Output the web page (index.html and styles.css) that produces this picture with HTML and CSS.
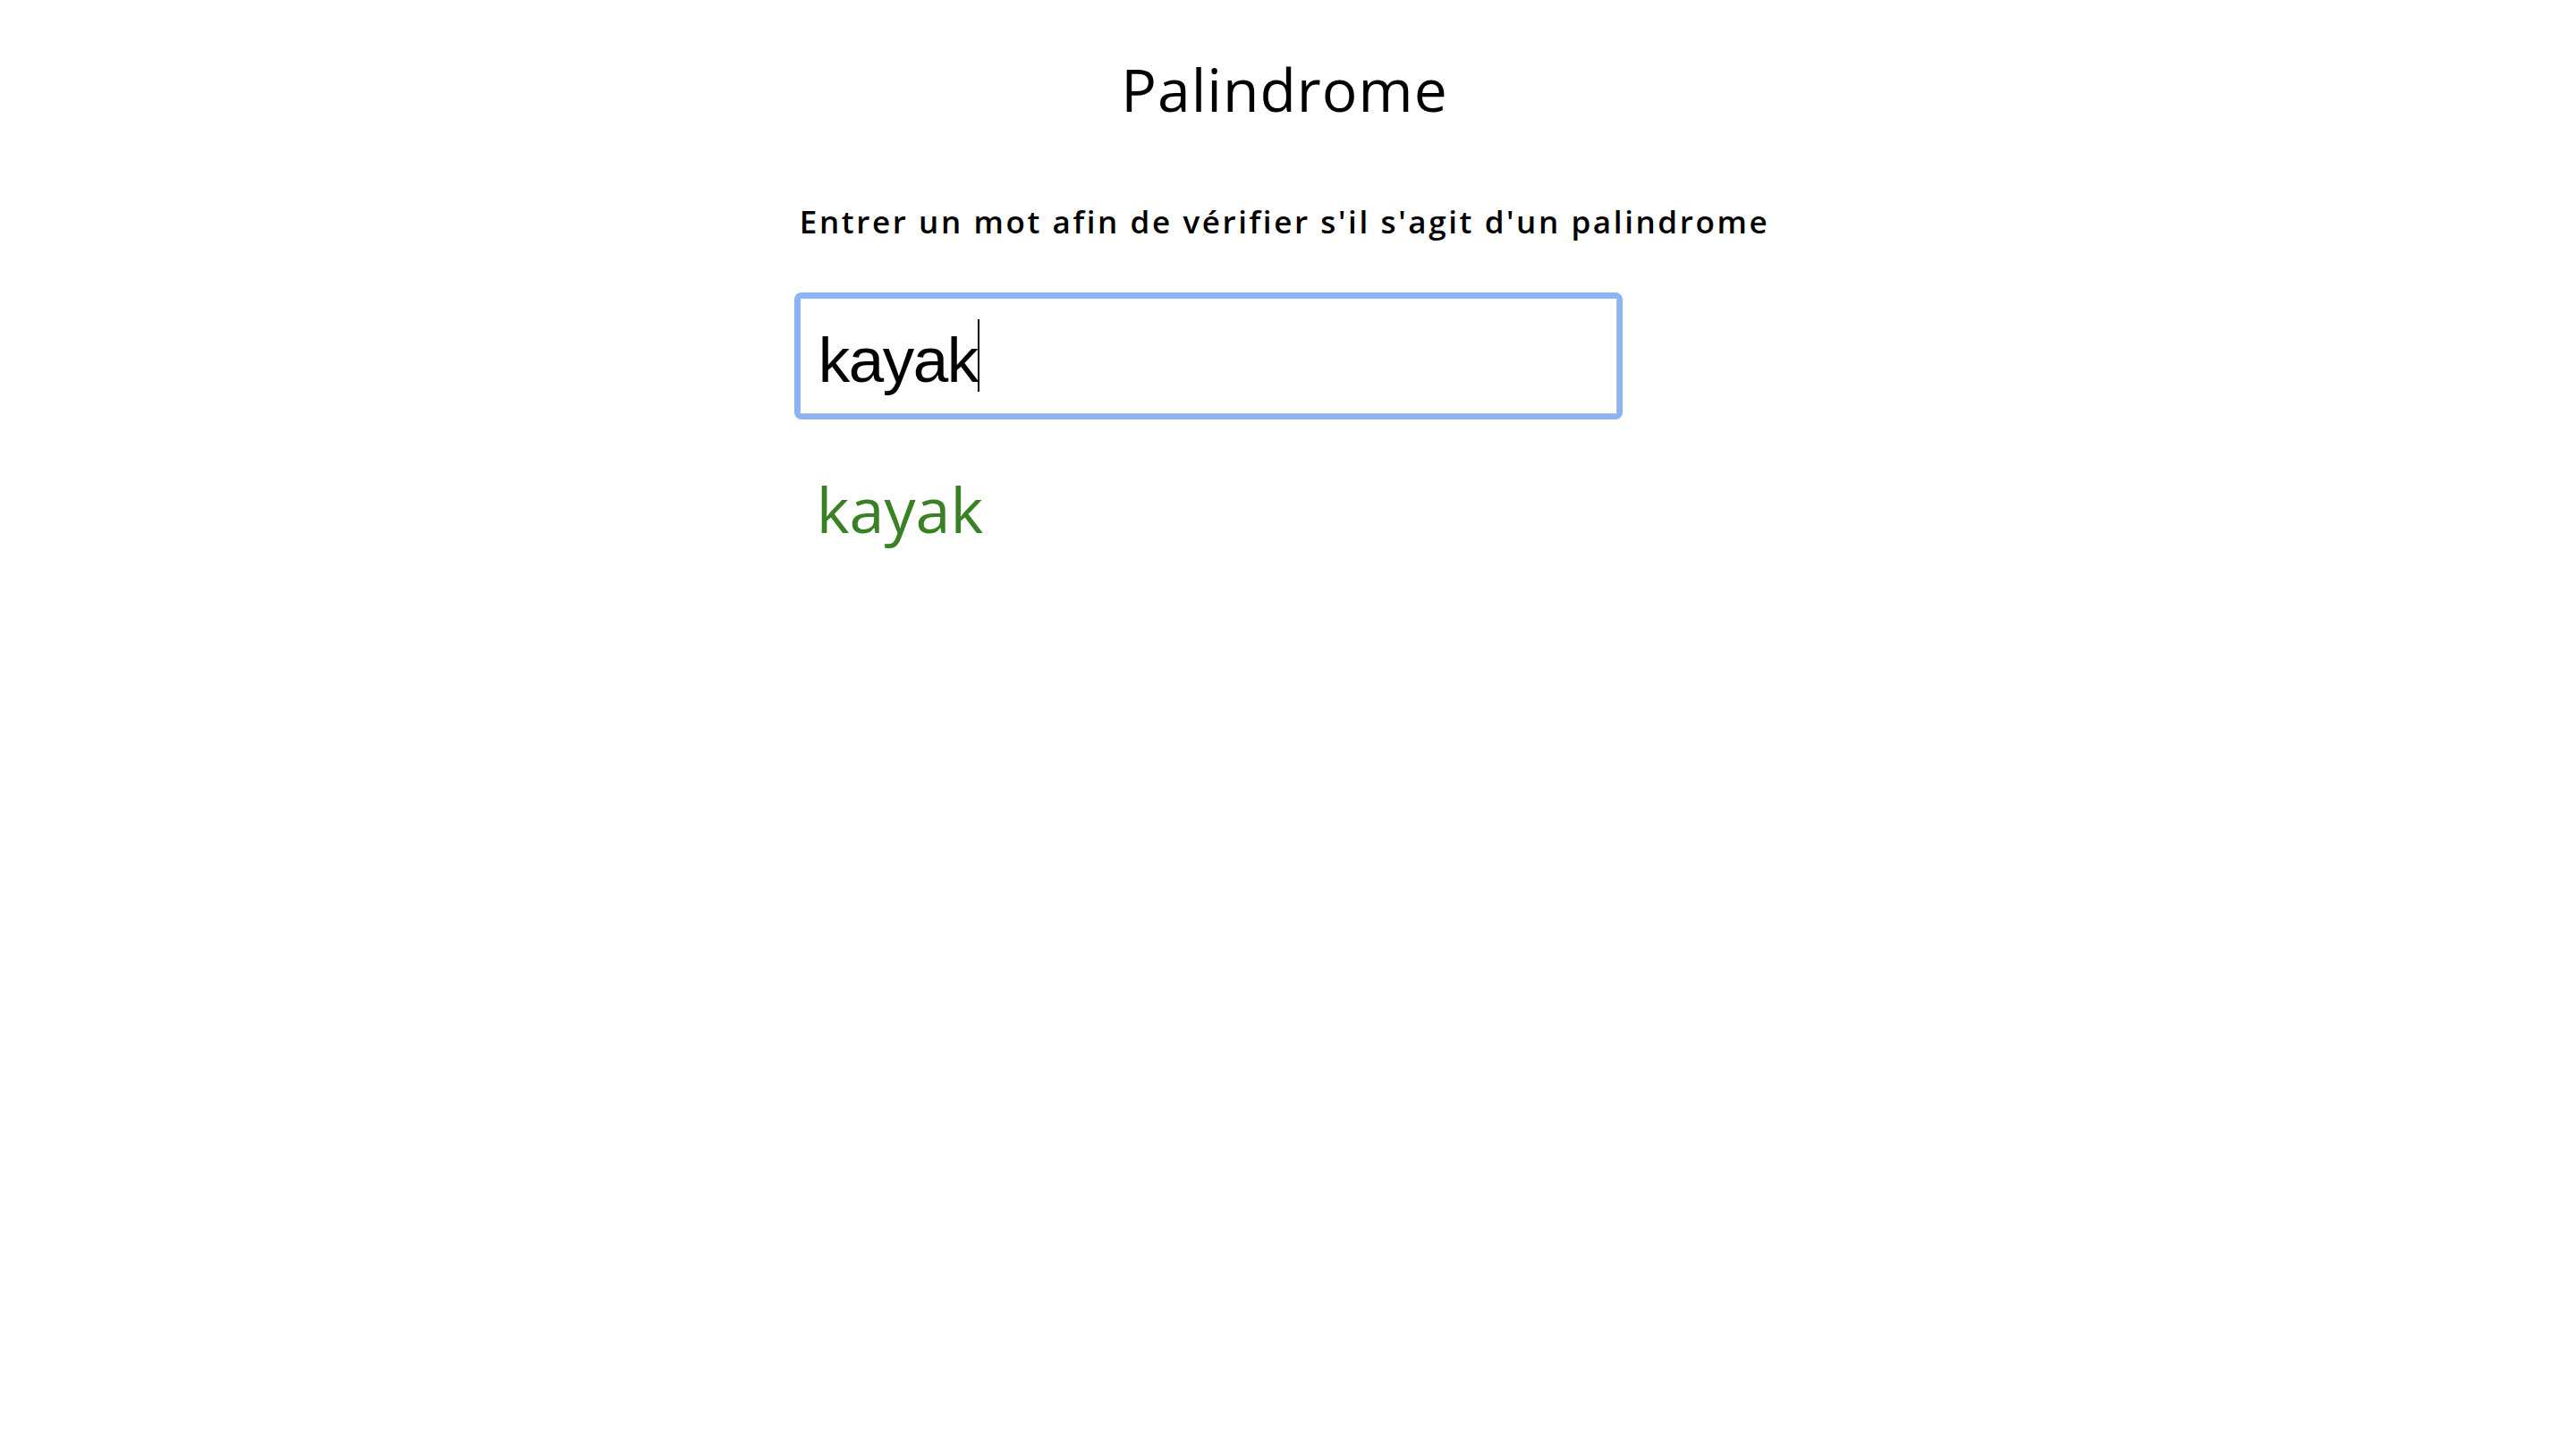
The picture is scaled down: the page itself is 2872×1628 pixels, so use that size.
FILE: index.html
```html
<!DOCTYPE html>
<html lang="fr">
<head>
<meta charset="utf-8">
<title>Palindrome</title>
<link rel="stylesheet" href="styles.css">
</head>
<body>
<h1 class="title">Palindrome</h1>
<div class="wrap">
  <div class="panel">
    <p class="lead">Entrer un mot afin de vérifier s'il s'agit d'un palindrome</p>
    <div class="field"><span class="value">kayak</span><span class="caret-anchor"><span class="caret"></span></span></div>
    <div class="result">kayak</div>
  </div>
</div>
</body>
</html>
```
FILE: styles.css
```css
html, body { margin: 0; padding: 0; background: #fff; }
body { font-family: "Open Sans", "Liberation Sans", sans-serif; color: #000; }
.title { margin: 55px 0 0; font-size: 66px; font-weight: 400; line-height: 88px; letter-spacing: 1px; text-align: center; }
.wrap { display: flex; justify-content: center; }
.panel { display: flex; flex-direction: column; align-items: flex-start; }
.lead { margin: 81px 0 0; font-size: 35px; font-weight: 600; line-height: 48px; letter-spacing: 2.6px; }
.field { margin-top: 61px; box-sizing: border-box; width: 914px; height: 130px; padding: 28px 20px 0; border: 1px solid; border-color: #8cb4f5 #bcbcbc #bcbcbc #8cb4f5; border-radius: 2px; outline: 6px solid #8cb4f5; font-family: "Liberation Sans", Arial, sans-serif; font-size: 71px; letter-spacing: -1.5px; line-height: 81px; }
.caret-anchor { position: relative; }
.caret { position: absolute; left: 0; top: -6px; width: 2px; height: 81px; background: #000; }
.result { margin-top: 59px; padding-left: 19px; font-size: 70px; line-height: 94px; color: #3a8025; }
```
